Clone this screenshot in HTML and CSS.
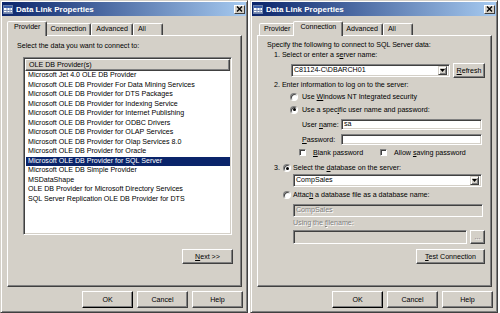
FILE: index.html
```html
<!DOCTYPE html>
<html>
<head>
<meta charset="utf-8">
<link rel="stylesheet" href="styles.css">
</head>
<body>
<div class="dialog">
  <div class="titlebar">
    <svg class="title-icon" width="10" height="9" viewBox="0 0 10 9"><rect x="0.5" y="0.5" width="9" height="8" fill="#fff" stroke="#6a7fa8"/><rect x="1" y="1" width="8" height="2" fill="#3a5ea8"/><path d="M1 5.5H9M1 7.5H9M4 3V8.5M7 3V8.5" stroke="#7d8fb5" stroke-width="1"/></svg>
    <span class="title">Data Link Properties</span>
    <span class="close"><svg width="7" height="6" viewBox="0 0 7 6"><path d="M1 0.5L6 5.5M6 0.5L1 5.5" stroke="#000" stroke-width="1.4"/></svg></span>
  </div>
  <div class="body">
    <div class="tabs">
      <div class="tab sel">Provider</div>
      <div class="tab">Connection</div>
      <div class="tab">Advanced</div>
      <div class="tab">All</div>
    </div>
    <div class="panel panel-left">
      <div class="lbl">Select the data you want to connect to:</div>
      <div class="listbox">
        <div class="lb-header">OLE DB Provider(s)</div>
        <div class="lb-item">Microsoft Jet 4.0 OLE DB Provider</div>
        <div class="lb-item">Microsoft OLE DB Provider For Data Mining Services</div>
        <div class="lb-item">Microsoft OLE DB Provider for DTS Packages</div>
        <div class="lb-item">Microsoft OLE DB Provider for Indexing Service</div>
        <div class="lb-item">Microsoft OLE DB Provider for Internet Publishing</div>
        <div class="lb-item">Microsoft OLE DB Provider for ODBC Drivers</div>
        <div class="lb-item">Microsoft OLE DB Provider for OLAP Services</div>
        <div class="lb-item">Microsoft OLE DB Provider for Olap Services 8.0</div>
        <div class="lb-item">Microsoft OLE DB Provider for Oracle</div>
        <div class="lb-item selected">Microsoft OLE DB Provider for SQL Server</div>
        <div class="lb-item">Microsoft OLE DB Simple Provider</div>
        <div class="lb-item">MSDataShape</div>
        <div class="lb-item">OLE DB Provider for Microsoft Directory Services</div>
        <div class="lb-item">SQL Server Replication OLE DB Provider for DTS</div>
      </div>
      <div class="right-row next-row">
        <div class="btn small next"><span><u>N</u>ext &gt;&gt;</span></div>
      </div>
    </div>
    <div class="footer">
      <div class="btn default">OK</div>
      <div class="btn">Cancel</div>
      <div class="btn">Help</div>
    </div>
  </div>
</div>

<div class="dialog">
  <div class="titlebar">
    <svg class="title-icon" width="10" height="9" viewBox="0 0 10 9"><rect x="0.5" y="0.5" width="9" height="8" fill="#fff" stroke="#6a7fa8"/><rect x="1" y="1" width="8" height="2" fill="#3a5ea8"/><path d="M1 5.5H9M1 7.5H9M4 3V8.5M7 3V8.5" stroke="#7d8fb5" stroke-width="1"/></svg>
    <span class="title">Data Link Properties</span>
    <span class="close"><svg width="7" height="6" viewBox="0 0 7 6"><path d="M1 0.5L6 5.5M6 0.5L1 5.5" stroke="#000" stroke-width="1.4"/></svg></span>
  </div>
  <div class="body">
    <div class="tabs">
      <div class="tab">Provider</div>
      <div class="tab sel">Connection</div>
      <div class="tab">Advanced</div>
      <div class="tab">All</div>
    </div>
    <div class="panel panel-right">
      <div class="lbl">Specify the following to connect to SQL Server data:</div>
      <div class="lbl ind1">1. Select or enter a s<u>e</u>rver name:</div>
      <div class="server-row">
        <div class="combo server-combo">
          <span class="combo-text">C81124-C\DBARCH01</span>
          <span class="drop"><svg width="5" height="3" viewBox="0 0 5 3"><path d="M0 0H5L2.5 3Z" fill="#000"/></svg></span>
        </div>
        <div class="btn small refresh"><span><u>R</u>efresh</span></div>
      </div>
      <div class="lbl ind1 step2">2. Enter information to log on to the server:</div>
      <div class="opt-row">
        <span class="radio"></span><span>Use <u>W</u>indows NT Integrated security</span>
      </div>
      <div class="opt-row">
        <span class="radio on"></span><span>Use a spec<u>i</u>fic user name and password:</span>
      </div>
      <div class="field-row user-row">
        <span class="field-label">User <u>n</u>ame:</span>
        <span class="input"><span class="input-text">sa</span></span>
      </div>
      <div class="field-row pass-row">
        <span class="field-label"><u>P</u>assword:</span>
        <span class="input"></span>
      </div>
      <div class="check-row">
        <span class="check-item blank"><span class="checkbox"></span><span><u>B</u>lank password</span></span>
        <span class="check-item"><span class="checkbox"></span><span>Allow <u>s</u>aving password</span></span>
      </div>
      <div class="step3-row">
        <span class="num">3.</span><span class="radio on"></span><span>Select the <u>d</u>atabase on the server:</span>
      </div>
      <div class="combo db-combo">
        <span class="combo-text">CompSales</span>
        <span class="drop"><svg width="5" height="3" viewBox="0 0 5 3"><path d="M0 0H5L2.5 3Z" fill="#000"/></svg></span>
      </div>
      <div class="attach-row">
        <span class="radio"></span><span>Attac<u>h</u> a database file as a database name:</span>
      </div>
      <div class="input disabled db-name"><span class="input-text">CompSales</span></div>
      <div class="lbl disabled-text using">Using the <u>f</u>ilename:</div>
      <div class="file-row">
        <span class="input disabled file-input"></span>
        <span class="btn browse"><span class="disabled-text">...</span></span>
      </div>
      <div class="right-row test-row">
        <div class="btn small test"><span><u>T</u>est Connection</span></div>
      </div>
    </div>
    <div class="footer">
      <div class="btn default">OK</div>
      <div class="btn">Cancel</div>
      <div class="btn">Help</div>
    </div>
  </div>
</div>
</body>
</html>
```

FILE: styles.css
```css
* { box-sizing: border-box; }

body {
  margin: 0;
  width: 500px;
  height: 313px;
  overflow: hidden;
  background: #ffffff;
  font-family: "Liberation Sans", Arial, sans-serif;
  font-size: 7.1px;
  color: #000;
  display: flex;
  gap: 2px;
}

u { text-decoration: underline; text-underline-offset: 1px; }

.dialog {
  width: 248px;
  height: 313px;
  flex: none;
  background: #d4d0c8;
  border: 1px solid;
  border-color: #d4d0c8 #404040 #404040 #d4d0c8;
  box-shadow: inset 1px 1px #fff, inset -1px -1px #808080;
  padding: 1px;
  display: flex;
  flex-direction: column;
}

.titlebar {
  height: 14px;
  flex: none;
  background: linear-gradient(to right, #0a246a, #a6caf0);
  display: flex;
  align-items: center;
  padding-left: 1px;
  color: #fff;
  font-weight: bold;
  font-size: 8px;
}

.title-icon { margin-right: 3px; flex: none; }
.title { flex: 1; white-space: nowrap; }

.close {
  width: 11px;
  height: 9px;
  margin-right: 1px;
  background: #d4d0c8;
  border: 1px solid;
  border-color: #fff #404040 #404040 #fff;
  display: flex;
  align-items: center;
  justify-content: center;
}

.body {
  flex: 1;
  display: flex;
  flex-direction: column;
  padding: 5px 4px 0 5px;
}

.tabs {
  display: flex;
  align-items: flex-end;
  height: 14px;
  padding-left: 2px;
  position: relative;
  z-index: 1;
}

.tab {
  height: 12px;
  min-width: 30px;
  padding: 1px 4px 0 4px;
  line-height: 9px;
  white-space: nowrap;
  border: 1px solid;
  border-bottom: none;
  border-color: #fff #404040 transparent #fff;
  border-radius: 2px 2px 0 0;
  box-shadow: inset -1px 0 #808080;
  background: #d4d0c8;
}

.tab.sel {
  height: 15px;
  margin: 0 -2px -1px -2px;
  padding: 1px 6px 0 6px;
  position: relative;
  z-index: 2;
}

.panel {
  height: 252px;
  flex: none;
  border: 1px solid;
  border-color: #fff #404040 #404040 #fff;
  box-shadow: inset -1px -1px #808080;
}

.footer {
  display: flex;
  justify-content: flex-end;
  gap: 4px;
  margin-top: 4px;
  margin-right: -1px;
}

.btn {
  width: 51px;
  height: 17px;
  display: flex;
  align-items: center;
  justify-content: center;
  background: #d4d0c8;
  border: 1px solid;
  border-color: #fff #404040 #404040 #fff;
  box-shadow: inset -1px -1px #808080;
  white-space: nowrap;
}

.btn.default { border-color: #fff #000 #000 #fff; }
.btn.small { height: 15px; }

.lbl { line-height: 10px; white-space: nowrap; }

/* left panel */
.panel-left { padding: 5px 8px 0 9px; }

.listbox {
  margin: 6px 1px 0 6px;
  height: 178px;
  background: #fff;
  border: 1px solid;
  border-color: #808080 #fff #fff #808080;
  box-shadow: inset 1px 1px #404040, inset -1px -1px #d4d0c8;
  padding: 1px;
  overflow: hidden;
}

.lb-header {
  height: 12px;
  line-height: 10px;
  padding-left: 3px;
  background: #d4d0c8;
  border: 1px solid;
  border-color: #fff #404040 #404040 #fff;
  box-shadow: inset -1px -1px #808080;
}

.lb-item {
  height: 9.5px;
  line-height: 9.5px;
  padding-left: 2px;
  margin-left: 1px;
  white-space: nowrap;
}

.lb-item.selected { background: #0a246a; color: #fff; }

.right-row { display: flex; justify-content: flex-end; }
.next-row { margin-top: 14px; }

/* right panel */
.panel-right { padding: 4px 6px 0 9px; }
.ind1 { margin-left: 7px; }

.server-row {
  display: flex;
  align-items: center;
  height: 15px;
  margin-top: 3px;
}

.combo {
  height: 13px;
  display: flex;
  align-items: center;
  background: #fff;
  border: 1px solid;
  border-color: #808080 #fff #fff #808080;
  box-shadow: inset 1px 1px #404040, inset -1px -1px #d4d0c8;
  padding: 2px 2px 2px 2px;
}

.combo-text { flex: 1; white-space: nowrap; line-height: 9px; }

.drop {
  width: 9px;
  height: 9px;
  display: flex;
  align-items: center;
  justify-content: center;
  background: #d4d0c8;
  border: 1px solid;
  border-color: #d4d0c8 #404040 #404040 #d4d0c8;
  box-shadow: inset 1px 1px #fff, inset -1px -1px #808080;
}

.server-combo { margin-left: 24px; width: 159px; }
.refresh { width: 32px; margin-left: 3px; }

.step2 { margin-top: 2px; }

.opt-row {
  display: flex;
  align-items: center;
  height: 13px;
  margin-left: 23px;
  gap: 4px;
  white-space: nowrap;
}

.radio {
  width: 8px;
  height: 8px;
  flex: none;
  border-radius: 50%;
  background: #fff;
  border: 1px solid;
  border-color: #808080 #fff #fff #808080;
  box-shadow: inset 1px 1px #404040;
  display: flex;
  align-items: center;
  justify-content: center;
}

.radio.on::after {
  content: "";
  width: 3px;
  height: 3px;
  border-radius: 50%;
  background: #000;
}

.field-row {
  display: flex;
  align-items: center;
  height: 11px;
  margin-left: 35px;
  margin-right: 3px;
}

.user-row { margin-top: 3px; }
.pass-row { margin-top: 4px; }

.field-label { width: 39px; flex: none; white-space: nowrap; }

.input {
  flex: 1;
  height: 11px;
  display: flex;
  align-items: center;
  background: #fff;
  border: 1px solid;
  border-color: #808080 #fff #fff #808080;
  box-shadow: inset 1px 1px #404040, inset -1px -1px #d4d0c8;
  padding-left: 2px;
}

.input-text { line-height: 9px; white-space: nowrap; }

.check-row {
  display: flex;
  align-items: center;
  height: 11px;
  margin-top: 2px;
  margin-left: 32px;
  white-space: nowrap;
}

.check-item { display: flex; align-items: center; gap: 7px; }
.check-item.blank { width: 81px; }

.checkbox {
  width: 7px;
  height: 7px;
  flex: none;
  background: #fff;
  border: 1px solid;
  border-color: #808080 #fff #fff #808080;
  box-shadow: inset 1px 1px #404040;
}

.step3-row {
  display: flex;
  align-items: center;
  height: 10px;
  margin-top: 5px;
  margin-left: 7px;
  white-space: nowrap;
}

.num { width: 9px; flex: none; }
.step3-row .radio { margin-right: 2px; }

.db-combo { margin: 1px 3px 0 26px; }

.attach-row {
  display: flex;
  align-items: center;
  height: 10px;
  margin-top: 3px;
  margin-left: 16px;
  gap: 2px;
  white-space: nowrap;
}

.input.disabled { background: #d4d0c8; }

.disabled-text, .input.disabled .input-text {
  color: #808080;
  text-shadow: 1px 1px 0 #fff;
}

.db-name { height: 13px; margin: 4px 2px 0 26px; }
.using { margin: 1px 0 0 26px; }

.file-row {
  display: flex;
  align-items: center;
  height: 14px;
  margin: 2px 0 0 26px;
}

.file-input { flex: none; width: 174px; height: 14px; }
.browse { width: 15px; height: 14px; margin-left: 3px; align-items: flex-end; padding-bottom: 2px; }

.test-row { margin-top: 5px; }
.test { width: 69px; }
```
